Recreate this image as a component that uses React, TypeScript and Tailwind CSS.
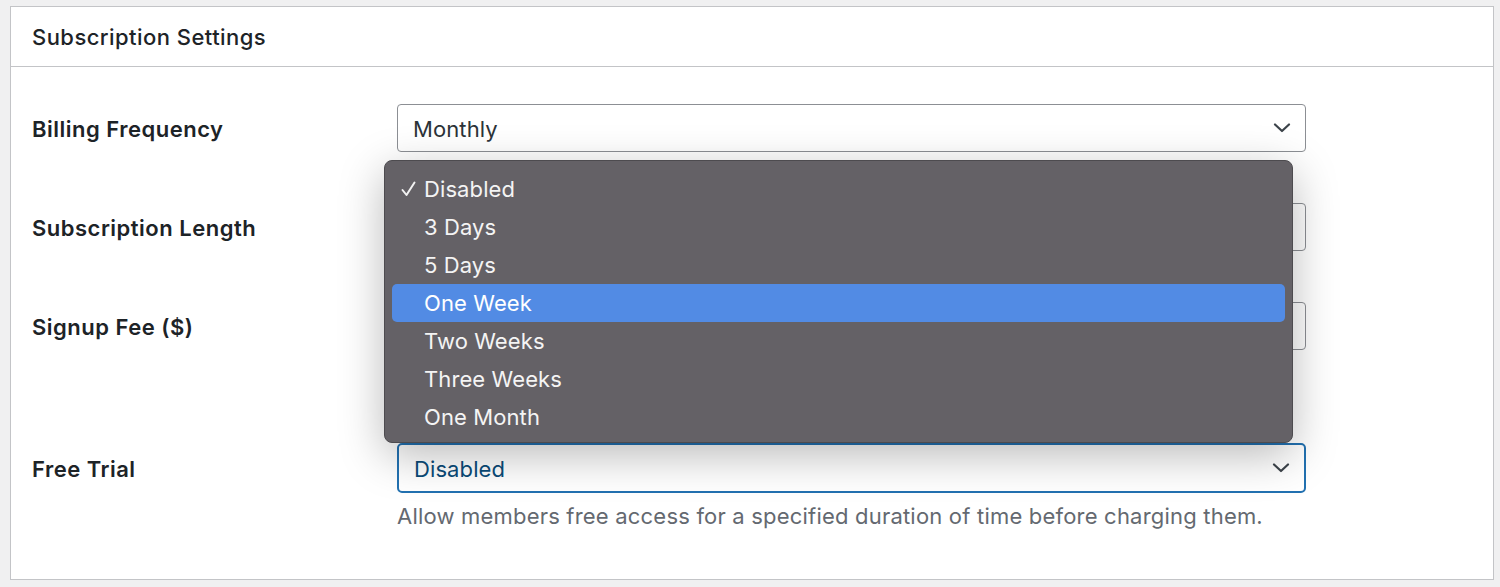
const options = ["Disabled", "3 Days", "5 Days", "One Week", "Two Weeks", "Three Weeks", "One Month"];

function Chevron() {
  return (
    <svg width="18" height="10" viewBox="0 0 18 10" fill="none" className="shrink-0">
      <path d="M2 1.5 9 8 16 1.5" stroke="#3c434a" strokeWidth="2.2" strokeLinecap="round" strokeLinejoin="round" />
    </svg>
  );
}

function CheckMark() {
  return (
    <svg width="15" height="16" viewBox="0 0 15 16" fill="none">
      <path d="M1.5 9 5.5 14 13.5 1.5" stroke="#f2f2f2" strokeWidth="2" strokeLinecap="round" strokeLinejoin="round" />
    </svg>
  );
}

function SelectBox({ value, focused = false }: { value?: string; focused?: boolean }) {
  return (
    <div
      className={`w-[909px] flex items-center justify-between pl-[15px] pr-[14px] bg-white ${
        focused
          ? "h-[50px] border-2 border-[#2271b1] rounded-[5px] text-[#0a4b78]"
          : "h-[48px] border border-[#8c8f94] rounded-[4px] text-[#2c3338]"
      }`}
    >
      <span className="text-[22px] leading-none pt-[2px] tracking-[0.1px]">{value}</span>
      <Chevron />
    </div>
  );
}

function Label({ children }: { children: string }) {
  return (
    <div className="w-[386px] pl-[21px] pt-[1px] text-[22px] leading-none font-semibold text-[#1d2327] tracking-[0.5px]">
      {children}
    </div>
  );
}

export default function App() {
  return (
    <div
      className="min-h-screen bg-[#f0f0f1] pt-[6px] pl-[10px] pr-[6px]"
      style={{ fontFamily: "Inter, 'Noto Sans', 'Liberation Sans', sans-serif" }}
    >
      <section className="relative h-[574px] bg-white border border-[#c3c4c7]">
        <div className="h-[60px] border-b border-[#c3c4c7] flex items-center pl-[21px]">
          <h2 className="text-[22px] leading-none font-medium text-[#1d2327] tracking-[0.45px]">Subscription Settings</h2>
        </div>

        <div className="pt-[37px] flex flex-col">
          <div className="flex items-center">
            <Label>Billing Frequency</Label>
            <SelectBox value="Monthly" />
          </div>
          <div className="flex items-center mt-[51px]">
            <Label>Subscription Length</Label>
            <SelectBox />
          </div>
          <div className="flex items-center mt-[51px]">
            <Label>Signup Fee ($)</Label>
            <div className="w-[909px] h-[48px] border border-[#8c8f94] rounded-[4px] bg-white" />
          </div>
          <div className="flex items-center mt-[93px]">
            <Label>Free Trial</Label>
            <SelectBox value="Disabled" focused />
          </div>
          <p className="ml-[386px] mt-[8px] text-[22px] leading-[30px] text-[#646970] tracking-[0.2px]">
            Allow members free access for a specified duration of time before charging them.
          </p>
        </div>

        <div className="absolute left-[373px] top-[153px] w-[909px] h-[283px] rounded-[8px] bg-[#646166] border border-[#4d4b4f] shadow-[0_12px_45px_rgba(0,0,0,0.28)] pt-[9px] px-[7px]">
          {options.map((opt) => (
            <div
              key={opt}
              className={`h-[38px] flex items-center rounded-[5px] text-[22px] leading-none tracking-[0.1px] ${
                opt === "One Week" ? "bg-[#528be4] text-white" : "text-[#f4f4f4]"
              }`}
            >
              <span className="w-[32px] flex justify-start pl-[9px]">{opt === "Disabled" && <CheckMark />}</span>
              <span>{opt}</span>
            </div>
          ))}
        </div>
      </section>
    </div>
  );
}
